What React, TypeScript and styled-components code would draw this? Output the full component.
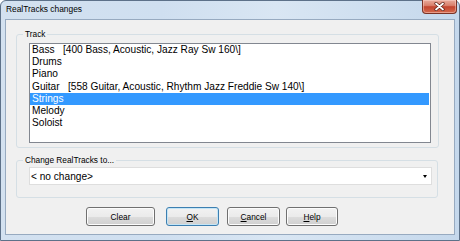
import * as React from 'react'
import styled, { createGlobalStyle } from 'styled-components'

const GlobalStyle = createGlobalStyle`
  html, body {
    margin: 0;
    padding: 0;
    overflow: hidden;
    background: #ffffff;
  }
  * {
    box-sizing: border-box;
  }
`

const tracks = [
  { name: 'Bass', extra: '[400 Bass, Acoustic, Jazz Ray Sw 160\\]' },
  { name: 'Drums' },
  { name: 'Piano' },
  { name: 'Guitar', extra: '[558 Guitar, Acoustic, Rhythm Jazz Freddie Sw 140\\]' },
  { name: 'Strings' },
  { name: 'Melody' },
  { name: 'Soloist' },
]

const App: React.FC<{}> = () => {
  const selected = 4

  return (
    <>
      <GlobalStyle />
      <Window>
        <TitleBar>
          <Title>RealTracks changes</Title>
          <CloseButton>
            <svg width="11" height="9" viewBox="0 0 11 9">
              <path d="M2 1.5 L9 7.5 M9 1.5 L2 7.5" stroke="#5a1e14" strokeWidth="3.2" strokeLinecap="round" />
              <path d="M2 1.5 L9 7.5 M9 1.5 L2 7.5" stroke="#ffffff" strokeWidth="1.8" strokeLinecap="round" />
            </svg>
          </CloseButton>
        </TitleBar>
        <Content>
          <Group mt="9px" width="423px" pb="4px">
            <Legend>Track</Legend>
            <ListBox>
              {tracks.map((t, i) => (
                <ListItem key={t.name} selected={i === selected}>
                  {t.name}
                  {t.extra ? '   ' + t.extra : ''}
                </ListItem>
              ))}
            </ListBox>
          </Group>
          <Group mt="7px" width="422px" pb="12px">
            <Legend>Change RealTracks to...</Legend>
            <Combo>
              <ComboText>&lt; no change&gt;</ComboText>
              <Arrow />
            </Combo>
          </Group>
          <ButtonRow>
            <Button w="69px">Clear</Button>
            <Button w="53px" ml="11px" isDefault>
              <u>O</u>K
            </Button>
            <Button w="53px" ml="8px">
              <u>C</u>ancel
            </Button>
            <Button w="52px" ml="6px">
              <u>H</u>elp
            </Button>
          </ButtonRow>
        </Content>
      </Window>
    </>
  )
}

const Window = styled.div`
  width: 460px;
  height: 241px;
  border: 1px solid #5d7189;
  border-radius: 6px 6px 0 0;
  padding: 0 4px 5px 4px;
  display: flex;
  flex-direction: column;
  background: linear-gradient(90deg, #d3e1f0 0%, #cfdff0 35%, #d9e6f3 60%, #c5d8ec 100%);
  font-family: "Liberation Sans", Arial, sans-serif;
`

const TitleBar = styled.div`
  height: 18px;
  display: flex;
  justify-content: space-between;
  align-items: flex-start;
  padding-left: 1px;
`

const Title = styled.div`
  font-size: 8.4px;
  line-height: 12px;
  padding-top: 2px;
  color: #000000;
`

const CloseButton = styled.div`
  width: 35px;
  height: 14px;
  margin-top: -1px;
  margin-right: -2px;
  border: 1px solid #7a3326;
  border-top: none;
  border-radius: 0 0 4px 4px;
  background: linear-gradient(180deg, #e9ab9c 0%, #d9806c 42%, #c3452f 52%, #d46a4e 100%);
  display: flex;
  align-items: center;
  justify-content: center;
  box-shadow: inset 0 0 0 1px rgba(255, 220, 210, 0.45);
`

const Content = styled.div`
  flex: 1;
  background: #f0f0f0;
  border: 1px solid #97aac0;
  display: flex;
  flex-direction: column;
`

const Group = styled.fieldset<{ mt: string; width: string; pb: string }>`
  margin: ${props => props.mt} 0 0 10px;
  width: ${props => props.width};
  padding: 4px 6px ${props => props.pb} 6px;
  border: 1px solid #d5dfe5;
  border-radius: 3px;
  min-inline-size: 0;
`

const Legend = styled.legend`
  padding: 0 2px;
  font-size: 8.3px;
  line-height: 10px;
  color: #000000;
`

const ListBox = styled.div`
  width: 402px;
  height: 100px;
  margin-left: 6px;
  background: #ffffff;
  border: 1px solid #828790;
  padding-right: 1px;
`

const ListItem = styled.div<{ selected?: boolean }>`
  height: 12.2px;
  line-height: 12.2px;
  padding-left: 2px;
  font-size: 10.15px;
  white-space: pre;
  color: ${props => (props.selected ? '#ffffff' : '#000000')};
  background: ${props => (props.selected ? '#3399ff' : 'transparent')};
`

const Combo = styled.div`
  width: 403px;
  height: 18px;
  margin-left: 6px;
  margin-top: -2px;
  background: #ffffff;
  border: 1px solid #dedede;
  display: flex;
  align-items: center;
  justify-content: space-between;
  padding: 0 4px 0 1px;
`

const ComboText = styled.span`
  font-size: 10.15px;
  color: #000000;
`

const Arrow = styled.span`
  width: 0;
  height: 0;
  border-left: 2.5px solid transparent;
  border-right: 2.5px solid transparent;
  border-top: 3px solid #000000;
  margin-top: 1px;
`

const ButtonRow = styled.div`
  display: flex;
  margin-top: 9px;
  padding-left: 80px;
`

const Button = styled.div<{ w: string; ml?: string; isDefault?: boolean }>`
  width: ${props => props.w};
  height: 19px;
  margin-left: ${props => (props.ml ? props.ml : '0')};
  border: 1px solid ${props => (props.isDefault ? '#3c7fb1' : '#707070')};
  border-radius: 3px;
  background: linear-gradient(180deg, #f2f2f2 0%, #ebebeb 50%, #dddddd 51%, #cfcfcf 100%);
  box-shadow: inset 0 0 0 1px ${props => (props.isDefault ? '#c4e5f6' : '#fcfcfc')};
  display: flex;
  align-items: center;
  justify-content: center;
  font-size: 8.3px;
  color: #000000;
  u {
    text-decoration-thickness: 1px;
    text-underline-offset: 1px;
  }
`

export default App
